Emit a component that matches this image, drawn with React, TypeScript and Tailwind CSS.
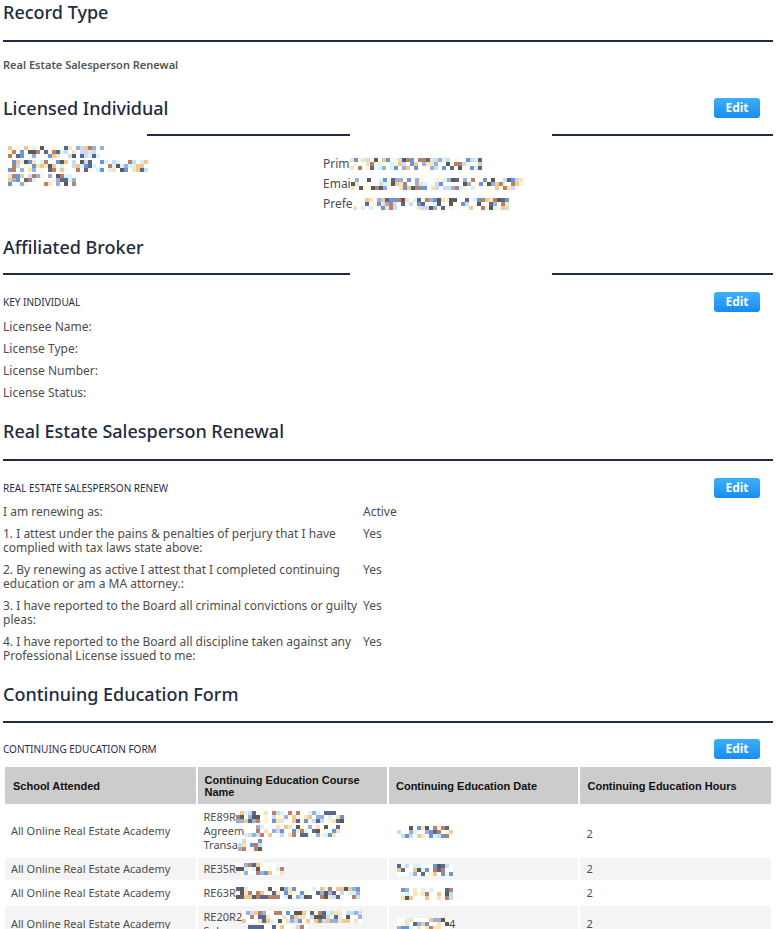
import React from "react";

const PALETTE = ["#5b6788", "#6a95d6", "#c9dcf5", "#f0c890", "#b8806a", "#fff6d8", "#d4f3fb", "#5a5a5a", "#ffffff", "#ffffff", "#ffffff", "#ffffff", "#9ab0d8", "#fbe3b8", "#ffffff"];

function Mosaic({ w, h, seed, cell = 4 }: { w: number; h: number; seed: number; cell?: number }) {
  let s = seed * 9301 + 49297;
  const rnd = () => {
    s = (s * 9301 + 49297) % 233280;
    return s / 233280;
  };
  const cols = Math.floor(w / cell);
  const rows = Math.floor(h / cell);
  const blocks: string[] = [];
  for (let i = 0; i < cols * rows; i++) {
    blocks.push(PALETTE[Math.floor(rnd() * PALETTE.length)]);
  }
  return (
    <span className="inline-flex flex-wrap align-middle" style={{ width: cols * cell, height: rows * cell }}>
      {blocks.map((c, i) => (
        <span key={i} style={{ width: cell, height: cell, background: c }} />
      ))}
    </span>
  );
}

function EditBtn() {
  return (
    <button className="w-[46px] h-[20px] rounded-[3px] bg-gradient-to-b from-[#3cb0fb] to-[#168cf0] text-white text-[12px] font-bold leading-[20px] font-['Noto_Sans',sans-serif]">
      Edit
    </button>
  );
}

function Heading({ children, className = "" }: { children: React.ReactNode; className?: string }) {
  return (
    <h2 className={`text-[18px] leading-[24px] font-medium text-[#1e2b40] ${className}`}>{children}</h2>
  );
}

function SubRow({ label, className = "" }: { label: string; className?: string }) {
  return (
    <div className={`flex items-center justify-between pr-[13px] h-[20px] ${className}`}>
      <span className="text-[10px] text-[#1f2d4a] uppercase">{label}</span>
      <EditBtn />
    </div>
  );
}

const renewRows: [string, string][] = [
  ["I am renewing as:", "Active"],
  ["1. I attest under the pains & penalties of perjury that I have complied with tax laws state above:", "Yes"],
  ["2. By renewing as active I attest that I completed continuing education or am a MA attorney.:", "Yes"],
  ["3. I have reported to the Board all criminal convictions or guilty pleas:", "Yes"],
  ["4. I have reported to the Board all discipline taken against any Professional License issued to me:", "Yes"],
];

export default function App() {
  return (
    <div className="w-[777px] bg-white pl-[3px] pr-[4px] font-['Noto_Sans',sans-serif] text-[#4d4d4d] overflow-hidden h-[929px]">
      {/* Record Type */}
      <Heading>Record Type</Heading>
      <div className="mt-[16px] h-[2px] bg-[#1f2d42]" />
      <div className="mt-[16px] text-[11px] leading-[14px] font-semibold text-[#555]">Real Estate Salesperson Renewal</div>

      {/* Licensed Individual */}
      <div className="mt-[24px] flex items-center justify-between pr-[13px]">
        <Heading>Licensed Individual</Heading>
        <EditBtn />
      </div>
      <div className="mt-[14px] flex">
        <div className="w-[144px]" />
        <div className="w-[203px] h-[2px] bg-[#1f2d42]" />
        <div className="w-[202px]" />
        <div className="flex-1 h-[2px] bg-[#1f2d42]" />
      </div>
      <div className="mt-[10px] flex h-[87px]">
        <div className="w-[320px] pl-[5px] flex flex-col gap-[2px]">
          <Mosaic w={96} h={12} seed={3} />
          <Mosaic w={140} h={12} seed={7} />
          <Mosaic w={68} h={12} seed={11} />
        </div>
        <div className="flex flex-col pt-[8px] text-[12px] leading-[20px]">
          <div className="flex items-center">
            <span>Prim</span>
            <Mosaic w={132} h={12} seed={17} />
          </div>
          <div className="flex items-center">
            <span>Emai</span>
            <Mosaic w={172} h={12} seed={23} />
          </div>
          <div className="flex items-center">
            <span>Prefe</span>
            <Mosaic w={156} h={12} seed={29} />
          </div>
        </div>
      </div>

      {/* Affiliated Broker */}
      <Heading className="mt-[2px]">Affiliated Broker</Heading>
      <div className="mt-[14px] flex">
        <div className="w-[347px] h-[2px] bg-[#1f2d42]" />
        <div className="w-[202px]" />
        <div className="flex-1 h-[2px] bg-[#1f2d42]" />
      </div>
      <SubRow label="Key Individual" className="mt-[17px]" />
      <div className="mt-[4px] text-[12px] leading-[22px]">
        <div>Licensee Name:</div>
        <div>License Type:</div>
        <div>License Number:</div>
        <div>License Status:</div>
      </div>

      {/* Renewal */}
      <Heading className="mt-[15px]">Real Estate Salesperson Renewal</Heading>
      <div className="mt-[16px] h-[2px] bg-[#1f2d42]" />
      <SubRow label="Real Estate Salesperson Renew" className="mt-[17px]" />
      <div className="mt-[7px] flex flex-col gap-[8px] text-[12px] leading-[14px]">
        {renewRows.map(([l, v], i) => (
          <div key={i} className="grid grid-cols-[360px_1fr]">
            <div>{l}</div>
            <div>{v}</div>
          </div>
        ))}
      </div>

      {/* Continuing Education */}
      <Heading className="mt-[19px]">Continuing Education Form</Heading>
      <div className="mt-[15px] h-[2px] bg-[#1f2d42]" />
      <SubRow label="Continuing Education Form" className="mt-[16px]" />
      <table className="mt-[6px] w-full border-separate border-spacing-[2px] table-fixed">
        <colgroup>
          <col className="w-[190px]" />
          <col className="w-[189px]" />
          <col className="w-[189px]" />
          <col className="w-[190px]" />
        </colgroup>
        <thead>
          <tr className="h-[37px] bg-[#cccccc] text-[11px] leading-[12px] font-bold text-[#111] font-['Liberation_Sans',Arial,sans-serif] text-left">
            <th className="pl-[8px] pr-[6px]">School Attended</th>
            <th className="pl-[7px] pr-[6px]">Continuing Education Course Name</th>
            <th className="pl-[7px] pr-[6px]">Continuing Education Date</th>
            <th className="pl-[7px] pr-[6px]">Continuing Education Hours</th>
          </tr>
        </thead>
        <tbody className="text-[11px] leading-[14px] text-[#4d4d4d]">
          <tr>
            <td className="pl-[6px] py-[4px] align-middle">All Online Real Estate Academy</td>
            <td className="pl-[6px] py-[4px]">
              <div className="flex items-center"><span>RE89R</span><Mosaic w={110} h={12} seed={31} /></div>
              <div className="flex items-center"><span>Agreem</span><Mosaic w={96} h={12} seed={37} /></div>
              <div className="flex items-center"><span>Transa</span><Mosaic w={24} h={12} seed={41} /></div>
            </td>
            <td className="pl-[8px] py-[4px]"><Mosaic w={56} h={12} seed={43} /></td>
            <td className="pl-[6px] py-[4px] pt-[10px]">2</td>
          </tr>
          <tr className="bg-[#f4f4f4]">
            <td className="pl-[6px] py-[4px]">All Online Real Estate Academy</td>
            <td className="pl-[6px] py-[4px]"><div className="flex items-center"><span>RE35R</span><Mosaic w={48} h={12} seed={47} /></div></td>
            <td className="pl-[8px] py-[4px]"><Mosaic w={56} h={12} seed={53} /></td>
            <td className="pl-[6px] py-[4px]">2</td>
          </tr>
          <tr>
            <td className="pl-[6px] py-[4px]">All Online Real Estate Academy</td>
            <td className="pl-[6px] py-[4px]"><div className="flex items-center"><span>RE63R</span><Mosaic w={124} h={12} seed={59} /></div></td>
            <td className="pl-[8px] py-[4px]"><Mosaic w={56} h={12} seed={61} /></td>
            <td className="pl-[6px] py-[4px]">2</td>
          </tr>
          <tr className="bg-[#f4f4f4]">
            <td className="pl-[6px] py-[4px] align-middle">All Online Real Estate Academy</td>
            <td className="pl-[6px] py-[4px]">
              <div className="flex items-center"><span>RE20R2</span><Mosaic w={120} h={12} seed={67} /></div>
              <div className="flex items-center"><span>Subsequ</span><Mosaic w={60} h={12} seed={71} /></div>
            </td>
            <td className="pl-[8px] py-[4px]"><div className="flex items-center"><Mosaic w={52} h={12} seed={73} /><span>4</span></div></td>
            <td className="pl-[6px] py-[4px]">2</td>
          </tr>
        </tbody>
      </table>
    </div>
  );
}
